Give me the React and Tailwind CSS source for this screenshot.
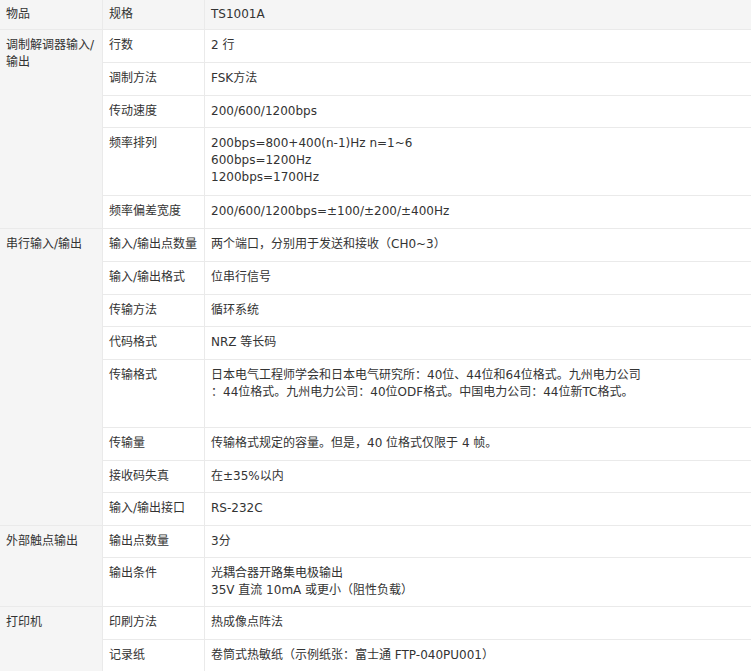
const rows = [
    { group: "调制解调器输入/输出", span: 5, items: [
        ["行数", ["2 行"], 33],
        ["调制方法", ["FSK方法"], 33],
        ["传动速度", ["200/600/1200bps"], 32],
        ["频率排列", ["200bps=800+400(n-1)Hz n=1~6", "600bps=1200Hz", "1200bps=1700Hz"], 68],
        ["频率偏差宽度", ["200/600/1200bps=±100/±200/±400Hz"], 33],
    ]},
    { group: "串行输入/输出", span: 8, items: [
        ["输入/输出点数量", ["两个端口，分别用于发送和接收（CH0~3）"], 33],
        ["输入/输出格式", ["位串行信号"], 33],
        ["传输方法", ["循环系统"], 32],
        ["代码格式", ["NRZ 等长码"], 33],
        ["传输格式", ["日本电气工程师学会和日本电气研究所：40位、44位和64位格式。九州电力公司", "：44位格式。九州电力公司：40位ODF格式。中国电力公司：44位新TC格式。"], 68],
        ["传输量", ["传输格式规定的容量。但是，40 位格式仅限于 4 帧。"], 33],
        ["接收码失真", ["在±35%以内"], 32],
        ["输入/输出接口", ["RS-232C"], 33],
    ]},
    { group: "外部触点输出", span: 2, items: [
        ["输出点数量", ["3分"], 32],
        ["输出条件", ["光耦合器开路集电极输出", "35V 直流 10mA 或更小（阻性负载）"], 49],
    ]},
    { group: "打印机", span: 2, items: [
        ["印刷方法", ["热成像点阵法"], 33],
        ["记录纸", ["卷筒式热敏纸（示例纸张：富士通 FTP-040PU001）"], 33],
    ]},
];

const cell = "align-top border border-[#eaeaea] px-[6px] pt-[7px] leading-[17px] whitespace-nowrap";

export default function App() {
    return (
        <div className="w-[751px] h-[671px] overflow-hidden bg-white text-[12px] text-[#333]" style={{ fontFamily: '"DejaVu Sans", "Noto Sans CJK SC", sans-serif' }}>
            <table className="w-[753px] border-collapse -ml-px -mt-px table-fixed">
                <colgroup>
                    <col className="w-[103px]" />
                    <col className="w-[102px]" />
                    <col />
                </colgroup>
                <tbody>
                    <tr className="h-[30px] bg-[#f5f5f5]">
                        <td className={cell + " !pt-[6px]"}>物品</td>
                        <td className={cell + " !pt-[6px]"}>规格</td>
                        <td className={cell + " !pt-[6px]"}>TS1001A</td>
                    </tr>
                    {rows.map((g) =>
                        g.items.map((it, i) => (
                            <tr key={g.group + i} style={{ height: it[2] }}>
                                {i === 0 && (
                                    <td rowSpan={g.span} className={cell + " bg-[#f5f5f5] !whitespace-normal"}>{g.group}</td>
                                )}
                                <td className={cell}>{it[0]}</td>
                                <td className={cell}>
                                    {it[1].map((l) => <div key={l}>{l}</div>)}
                                </td>
                            </tr>
                        ))
                    )}
                </tbody>
            </table>
        </div>
    );
}
